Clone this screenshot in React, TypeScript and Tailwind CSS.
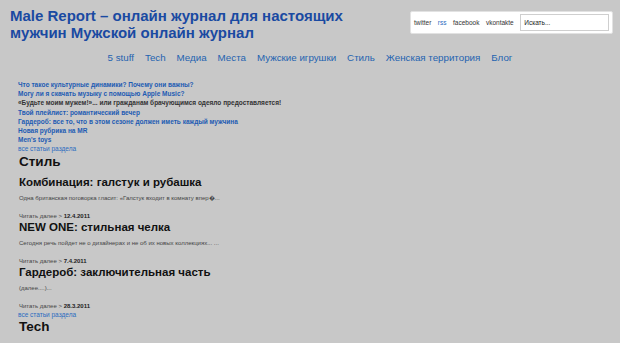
const navItems = ["5 stuff", "Tech", "Медиа", "Места", "Мужские игрушки", "Стиль", "Женская территория", "Блог"]

const topLinks: { label: string; dark?: boolean }[] = [
  { label: "Что такое культурные динамики? Почему они важны?" },
  { label: "Могу ли я скачать музыку с помощью Apple Music?" },
  { label: "«Будьте моим мужем!»... или гражданам брачующимся одеяло предоставляется!", dark: true },
  { label: "Твой плейлист: романтический вечер" },
  { label: "Гардероб: все то, что в этом сезоне должен иметь каждый мужчина" },
  { label: "Новая рубрика на MR" },
  { label: "Men's toys" },
]

const articles = [
  {
    title: "Комбинация: галстук и рубашка",
    excerpt: "Одна британская поговорка гласит: «Галстук входит в комнату впер�...",
    date: "12.4.2011",
  },
  {
    title: "NEW ONE: стильная челка",
    excerpt: "Сегодня речь пойдет не о дизайнерах и не об их новых коллекциях... ...",
    date: "7.4.2011",
  },
  {
    title: "Гардероб: заключительная часть",
    excerpt: "(далее....)...",
    date: "28.3.2011",
  },
]

function SectionLink() {
  return <a className="block text-[6.5px] leading-[9.2px] text-[#2b6cc0]">все статьи раздела</a>
}

function Article({ title, excerpt, date }: { title: string; excerpt: string; date: string }) {
  return (
    <div>
      <h3 className="text-[11.5px] font-bold leading-[14px] text-[#111]">{title}</h3>
      <p className="mt-[5px] text-[6px] leading-[8px] text-[#444]">{excerpt}</p>
      <div className="mt-[10px] text-[6px] leading-[8px] text-[#444]">
        Читать далее &gt; <b className="text-[#222]">{date}</b>
      </div>
    </div>
  )
}

export default function App() {
  return (
    <div className="h-[343px] w-[620px] overflow-hidden bg-[#c8c8c8] font-['Liberation_Sans',Arial,sans-serif]">
      {/* Header */}
      <div className="flex items-start justify-between pt-[7px] pl-[10px] pr-[7px]">
        <h1 className="w-[380px] text-[15px] font-bold leading-[17px] text-[#1a4aa2]">
          Male Report – онлайн журнал для настоящих мужчин Мужской онлайн журнал
        </h1>
        <div className="mt-[4px] flex h-[23px] w-[203px] items-center gap-[6.5px] rounded-[2px] border border-[#e2e2e2] bg-white pl-[3px] pr-[3px] text-[6.5px] text-[#333]">
          <a>twitter</a>
          <a className="text-[#2b6cc0]">rss</a>
          <a>facebook</a>
          <a>vkontakte</a>
          <div className="ml-auto flex h-[17px] w-[89px] items-center border border-[#cfcfcf] pl-[3px] text-[6.5px] text-[#222]">
            Искать...
          </div>
        </div>
      </div>

      {/* Nav */}
      <nav className="mt-[10px] flex justify-center gap-[11px] text-[9.75px] leading-[14px] text-[#2463b0]">
        {navItems.map((item) => (
          <a key={item}>{item}</a>
        ))}
      </nav>

      {/* Content */}
      <div className="mt-[15px] pl-[18px]">
        <ul>
          {topLinks.map((l) => (
            <li
              key={l.label}
              className={`text-[6.5px] font-bold leading-[9.2px] ${l.dark ? "text-[#333]" : "text-[#1d5bb3]"}`}
            >
              {l.label}
            </li>
          ))}
        </ul>
        <SectionLink />

        <h2 className="pl-px text-[13.5px] font-bold leading-[16px] text-[#111]">Стиль</h2>
        <div className="mt-[5px] flex flex-col pl-px">
          {articles.map((a) => (
            <Article key={a.title} {...a} />
          ))}
        </div>
        <SectionLink />
        <h2 className="pl-px text-[13.5px] font-bold leading-[16px] text-[#111]">Tech</h2>
      </div>
    </div>
  )
}
